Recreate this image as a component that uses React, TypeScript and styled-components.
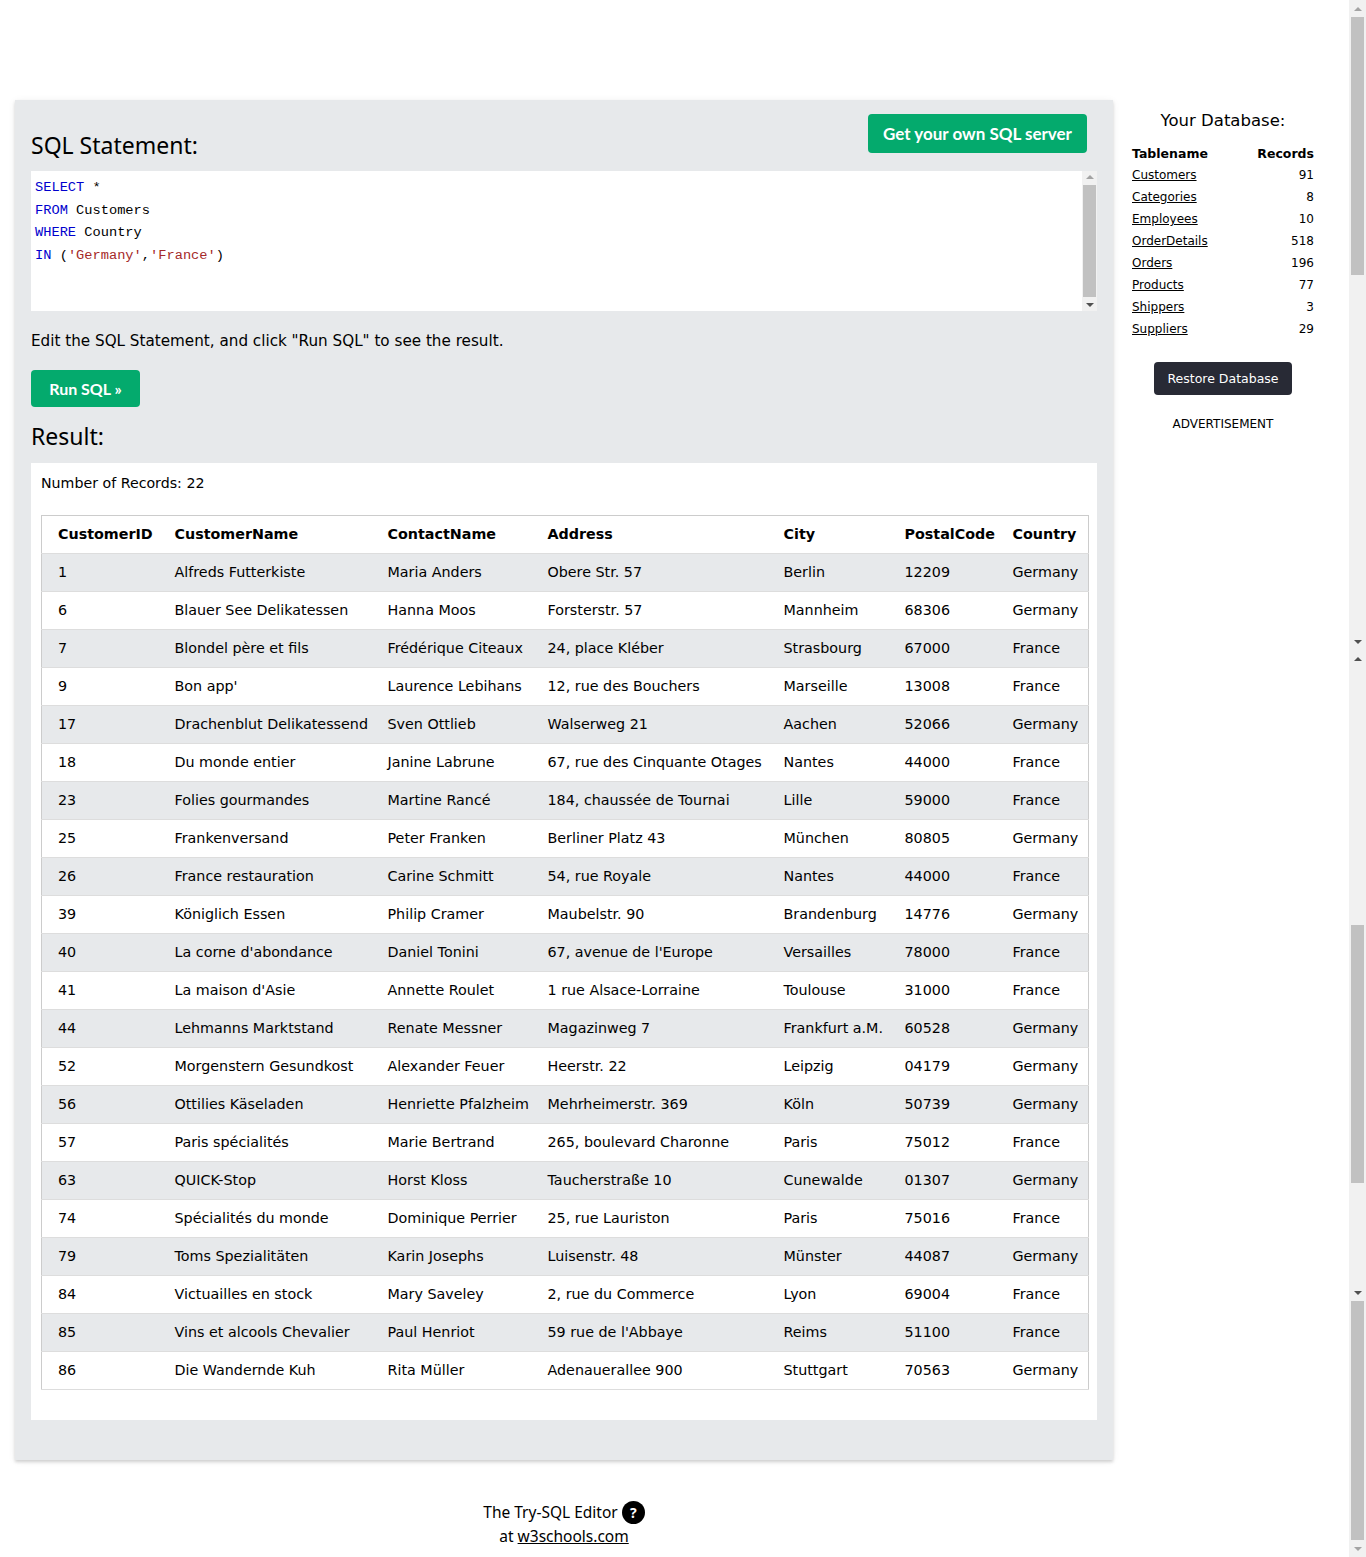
import styled, { createGlobalStyle } from 'styled-components';

const GlobalStyle = createGlobalStyle`
  html, body {
    margin: 0;
    padding: 0;
    background: #fff;
    color: #000;
    font-family: 'DejaVu Sans', Verdana, sans-serif;
  }
`;

type Customer = [string, string, string, string, string, string, string];

const customers: Customer[] = [
  ['1', 'Alfreds Futterkiste', 'Maria Anders', 'Obere Str. 57', 'Berlin', '12209', 'Germany'],
  ['6', 'Blauer See Delikatessen', 'Hanna Moos', 'Forsterstr. 57', 'Mannheim', '68306', 'Germany'],
  ['7', 'Blondel père et fils', 'Frédérique Citeaux', '24, place Kléber', 'Strasbourg', '67000', 'France'],
  ['9', "Bon app'", 'Laurence Lebihans', '12, rue des Bouchers', 'Marseille', '13008', 'France'],
  ['17', 'Drachenblut Delikatessend', 'Sven Ottlieb', 'Walserweg 21', 'Aachen', '52066', 'Germany'],
  ['18', 'Du monde entier', 'Janine Labrune', '67, rue des Cinquante Otages', 'Nantes', '44000', 'France'],
  ['23', 'Folies gourmandes', 'Martine Rancé', '184, chaussée de Tournai', 'Lille', '59000', 'France'],
  ['25', 'Frankenversand', 'Peter Franken', 'Berliner Platz 43', 'München', '80805', 'Germany'],
  ['26', 'France restauration', 'Carine Schmitt', '54, rue Royale', 'Nantes', '44000', 'France'],
  ['39', 'Königlich Essen', 'Philip Cramer', 'Maubelstr. 90', 'Brandenburg', '14776', 'Germany'],
  ['40', "La corne d'abondance", 'Daniel Tonini', "67, avenue de l'Europe", 'Versailles', '78000', 'France'],
  ['41', "La maison d'Asie", 'Annette Roulet', '1 rue Alsace-Lorraine', 'Toulouse', '31000', 'France'],
  ['44', 'Lehmanns Marktstand', 'Renate Messner', 'Magazinweg 7', 'Frankfurt a.M.', '60528', 'Germany'],
  ['52', 'Morgenstern Gesundkost', 'Alexander Feuer', 'Heerstr. 22', 'Leipzig', '04179', 'Germany'],
  ['56', 'Ottilies Käseladen', 'Henriette Pfalzheim', 'Mehrheimerstr. 369', 'Köln', '50739', 'Germany'],
  ['57', 'Paris spécialités', 'Marie Bertrand', '265, boulevard Charonne', 'Paris', '75012', 'France'],
  ['63', 'QUICK-Stop', 'Horst Kloss', 'Taucherstraße 10', 'Cunewalde', '01307', 'Germany'],
  ['74', 'Spécialités du monde', 'Dominique Perrier', '25, rue Lauriston', 'Paris', '75016', 'France'],
  ['79', 'Toms Spezialitäten', 'Karin Josephs', 'Luisenstr. 48', 'Münster', '44087', 'Germany'],
  ['84', 'Victuailles en stock', 'Mary Saveley', '2, rue du Commerce', 'Lyon', '69004', 'France'],
  ['85', 'Vins et alcools Chevalier', 'Paul Henriot', "59 rue de l'Abbaye", 'Reims', '51100', 'France'],
  ['86', 'Die Wandernde Kuh', 'Rita Müller', 'Adenauerallee 900', 'Stuttgart', '70563', 'Germany'],
];

const columns = [
  { name: 'CustomerID', width: 125 },
  { name: 'CustomerName', width: 213 },
  { name: 'ContactName', width: 160 },
  { name: 'Address', width: 236 },
  { name: 'City', width: 121 },
  { name: 'PostalCode', width: 108 },
  { name: 'Country', width: 84 },
];

const dbTables: [string, number][] = [
  ['Customers', 91],
  ['Categories', 8],
  ['Employees', 10],
  ['OrderDetails', 518],
  ['Orders', 196],
  ['Products', 77],
  ['Shippers', 3],
  ['Suppliers', 29],
];

// pieces of the window scrollbar as it shows in the stitched capture
const scrollParts: { kind: 'up' | 'down' | 'thumb' | 'gap'; h: number; off?: boolean }[] = [
  { kind: 'up', h: 17, off: true },
  { kind: 'thumb', h: 258 },
  { kind: 'gap', h: 358 },
  { kind: 'down', h: 17 },
  { kind: 'up', h: 17 },
  { kind: 'gap', h: 258 },
  { kind: 'thumb', h: 258 },
  { kind: 'gap', h: 101 },
  { kind: 'down', h: 17 },
  { kind: 'thumb', h: 239 },
  { kind: 'down', h: 17, off: true },
];

export default function App() {
  return (
    <>
      <GlobalStyle />
      <SPage>
        <SMain>
          <SLeft>
            <SPanel>
              <SHeaderRow>
                <SHeading>SQL Statement:</SHeading>
                <SServerButton>Get your own SQL server</SServerButton>
              </SHeaderRow>
              <SCodeBox>
                <SCode>
                  <div>
                    <SKw>SELECT</SKw> *
                  </div>
                  <div>
                    <SKw>FROM</SKw> Customers
                  </div>
                  <div>
                    <SKw>WHERE</SKw> Country
                  </div>
                  <div>
                    <SKw>IN</SKw> (<SStr>'Germany'</SStr>,<SStr>'France'</SStr>)
                  </div>
                </SCode>
                <SCodeScroll>
                  <SArrow $dir='up' $off />
                  <SCodeThumb />
                  <SArrow $dir='down' />
                </SCodeScroll>
              </SCodeBox>
              <SHint>Edit the SQL Statement, and click "Run SQL" to see the result.</SHint>
              <SRunButton>Run SQL »</SRunButton>
              <SHeading $small>Result:</SHeading>
              <SResult>
                <SCount>Number of Records: 22</SCount>
                <STable>
                  <colgroup>
                    {columns.map((c) => (
                      <SCol key={c.name} $w={c.width} />
                    ))}
                  </colgroup>
                  <thead>
                    <tr>
                      {columns.map((c) => (
                        <STh key={c.name}>{c.name}</STh>
                      ))}
                    </tr>
                  </thead>
                  <tbody>
                    {customers.map((row, i) => (
                      <STr key={row[0]} $shade={i % 2 === 0}>
                        {row.map((v, j) => (
                          <STd key={j}>{v}</STd>
                        ))}
                      </STr>
                    ))}
                  </tbody>
                </STable>
              </SResult>
            </SPanel>
            <SFooter>
              <div>
                The Try-SQL Editor <SHelp>?</SHelp>
              </div>
              <div>
                at <SFooterLink href='#'>w3schools.com</SFooterLink>
              </div>
            </SFooter>
          </SLeft>
          <SSidebar>
            <SDbTitle>Your Database:</SDbTitle>
            <SDbTable>
              <thead>
                <tr>
                  <SDbTh>Tablename</SDbTh>
                  <SDbTh $right>Records</SDbTh>
                </tr>
              </thead>
              <tbody>
                {dbTables.map(([name, count]) => (
                  <tr key={name}>
                    <SDbTd>
                      <SDbLink href='#'>{name}</SDbLink>
                    </SDbTd>
                    <SDbTd $right>{count}</SDbTd>
                  </tr>
                ))}
              </tbody>
            </SDbTable>
            <SRestoreButton>Restore Database</SRestoreButton>
            <SAdLabel>ADVERTISEMENT</SAdLabel>
          </SSidebar>
        </SMain>
        <SWindowScroll>
          {scrollParts.map((p, i) =>
            p.kind === 'thumb' ? (
              <SWinThumb key={i} $h={p.h} />
            ) : p.kind === 'gap' ? (
              <SWinGap key={i} $h={p.h} />
            ) : (
              <SWinArrowBox key={i}>
                <SArrow $dir={p.kind} $off={p.off} />
              </SWinArrowBox>
            )
          )}
        </SWindowScroll>
      </SPage>
    </>
  );
}

const SPage = styled.div`
  display: flex;
  height: 100vh;
  overflow: hidden;
`;

const SMain = styled.div`
  flex: 1;
  display: flex;
  align-items: flex-start;
  padding-top: 100px;
`;

const SLeft = styled.div`
  margin-left: 15px;
  width: 1098px;
  display: flex;
  flex-direction: column;
`;

const SPanel = styled.div`
  background: #e7e9eb;
  padding: 14px 16px 40px;
  box-shadow: 0 2px 3px rgba(0, 0, 0, 0.16), 0 1px 8px rgba(0, 0, 0, 0.06);
`;

const SHeaderRow = styled.div`
  display: flex;
  justify-content: space-between;
  align-items: flex-start;
`;

const SHeading = styled.h2<{ $small?: boolean }>`
  font-family: 'Noto Sans', sans-serif;
  font-weight: 400;
  font-size: 23px;
  line-height: 29px;
  margin: ${({ $small }) => ($small ? '15px 0 0' : '17px 0 0')};
  color: #000;
`;

const SServerButton = styled.button`
  background: #04aa6d;
  color: #fff;
  border: none;
  border-radius: 4px;
  height: 39px;
  width: 219px;
  padding: 0;
  margin-right: 10px;
  font-family: Lato, sans-serif;
  font-weight: 700;
  font-size: 17px;
  cursor: pointer;
`;

const SCodeBox = styled.div`
  display: flex;
  background: #fff;
  height: 140px;
  margin-top: 11px;
`;

const SCode = styled.div`
  flex: 1;
  padding: 6px 4px;
  font-family: 'Liberation Mono', monospace;
  font-size: 13.7px;
  line-height: 22.6px;
  color: #000;
`;

const SKw = styled.span`
  color: mediumblue;
`;

const SStr = styled.span`
  color: brown;
`;

const SCodeScroll = styled.div`
  width: 15px;
  display: flex;
  flex-direction: column;
  align-items: center;
  background: #f1f1f1;
  padding: 4px 0;
  gap: 6px;
`;

const SCodeThumb = styled.div`
  width: 13px;
  flex: 1;
  background: #c1c1c1;
`;

const SArrow = styled.div<{ $dir: 'up' | 'down'; $off?: boolean }>`
  width: 0;
  height: 0;
  border-left: 4px solid transparent;
  border-right: 4px solid transparent;
  ${({ $dir, $off }) =>
    $dir === 'up'
      ? `border-bottom: 4px solid ${$off ? '#a3a3a3' : '#505050'};`
      : `border-top: 4px solid ${$off ? '#a3a3a3' : '#505050'};`}
`;

const SHint = styled.p`
  margin: 19px 0 0;
  font-size: 15.2px;
  line-height: 22px;
`;

const SRunButton = styled.button`
  align-self: flex-start;
  display: block;
  margin-top: 18px;
  background: #04aa6d;
  color: #fff;
  border: none;
  border-radius: 4px;
  height: 37px;
  width: 109px;
  font-family: Lato, sans-serif;
  font-weight: 700;
  font-size: 16px;
  cursor: pointer;
`;

const SResult = styled.div`
  background: #fff;
  margin-top: 12px;
  padding: 8px 10px 30px;
`;

const SCount = styled.div`
  font-size: 14.2px;
  line-height: 24px;
`;

const STable = styled.table`
  margin-top: 20px;
  width: 100%;
  border-collapse: collapse;
  table-layout: fixed;
  border: 1px solid #ccc;
  font-size: 14.3px;
`;

const SCol = styled.col<{ $w: number }>`
  width: ${({ $w }) => $w}px;
`;

const STh = styled.th`
  text-align: left;
  font-weight: 700;
  padding: 8px 8px;
  height: 21px;
  line-height: 21px;
  white-space: nowrap;
  border-bottom: 1px solid #ddd;
  &:first-child {
    padding-left: 16px;
  }
`;

const STr = styled.tr<{ $shade: boolean }>`
  background: ${({ $shade }) => ($shade ? '#e7e9eb' : '#fff')};
  border-bottom: 1px solid #ddd;
`;

const STd = styled.td`
  padding: 8px 8px;
  height: 21px;
  line-height: 21px;
  white-space: nowrap;
  overflow: hidden;
  &:first-child {
    padding-left: 16px;
  }
`;

const SFooter = styled.div`
  margin-top: 40px;
  text-align: center;
  font-family: 'Noto Sans', sans-serif;
  font-size: 15.5px;
  line-height: 24px;
  color: #000;
`;

const SHelp = styled.span`
  display: inline-block;
  width: 23px;
  height: 23px;
  border-radius: 50%;
  background: #000;
  color: #fff;
  font-weight: 700;
  font-size: 14px;
  line-height: 23px;
  text-align: center;
  vertical-align: middle;
  margin-top: -3px;
`;

const SFooterLink = styled.a`
  color: #000;
  text-decoration: underline;
`;

const SSidebar = styled.div`
  width: 220px;
  padding-top: 8px;
  display: flex;
  flex-direction: column;
  align-items: center;
`;

const SDbTitle = styled.div`
  font-size: 16.5px;
  line-height: 26px;
`;

const SDbTable = styled.table`
  margin-top: 8px;
  width: 182px;
  border-collapse: collapse;
  font-size: 12px;
`;

const SDbTh = styled.th<{ $right?: boolean }>`
  padding: 0;
  height: 22px;
  font-weight: 700;
  font-size: 12.5px;
  text-align: ${({ $right }) => ($right ? 'right' : 'left')};
`;

const SDbTd = styled.td<{ $right?: boolean }>`
  padding: 0;
  height: 22px;
  text-align: ${({ $right }) => ($right ? 'right' : 'left')};
`;

const SDbLink = styled.a`
  color: #000;
  text-decoration: underline;
`;

const SRestoreButton = styled.button`
  margin-top: 22px;
  width: 138px;
  height: 33px;
  background: #282a35;
  color: #fff;
  border: none;
  border-radius: 4px;
  font-family: 'DejaVu Sans', Verdana, sans-serif;
  font-size: 12.5px;
  cursor: pointer;
`;

const SAdLabel = styled.div`
  margin-top: 21px;
  font-size: 12px;
  line-height: 16px;
`;

const SWindowScroll = styled.div`
  width: 17px;
  background: #f1f1f1;
  display: flex;
  flex-direction: column;
`;

const SWinThumb = styled.div<{ $h: number }>`
  height: ${({ $h }) => $h}px;
  margin: 0 2px;
  background: #c1c1c1;
`;

const SWinGap = styled.div<{ $h: number }>`
  height: ${({ $h }) => $h}px;
`;

const SWinArrowBox = styled.div`
  height: 17px;
  display: flex;
  align-items: center;
  justify-content: center;
`;
